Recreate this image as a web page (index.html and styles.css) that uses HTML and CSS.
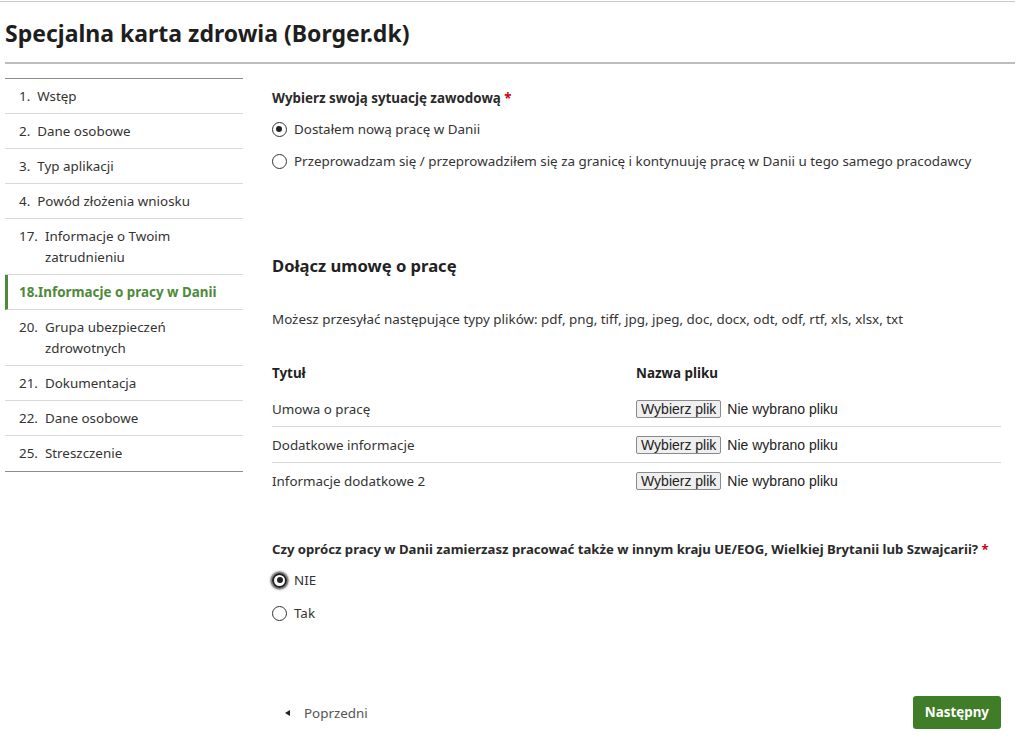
FILE: index.html
```html
<!DOCTYPE html>
<html lang="pl">
<head>
<meta charset="utf-8">
<title>Specjalna karta zdrowia (Borger.dk)</title>
<link rel="stylesheet" href="styles.css">
</head>
<body>
<div class="topline"></div>
<div class="page">
  <header class="header">
    <h1 class="title">Specjalna karta zdrowia (Borger.dk)</h1>
  </header>
  <div class="layout">
    <nav class="steps">
      <div class="step"><span class="num">1.</span><span class="lbl">Wstęp</span></div>
      <div class="step"><span class="num">2.</span><span class="lbl">Dane osobowe</span></div>
      <div class="step"><span class="num">3.</span><span class="lbl">Typ aplikacji</span></div>
      <div class="step"><span class="num">4.</span><span class="lbl">Powód złożenia wniosku</span></div>
      <div class="step"><span class="num">17.</span><span class="lbl">Informacje o Twoim zatrudnieniu</span></div>
      <div class="step active"><span class="num">18.</span><span class="lbl">Informacje o pracy w Danii</span></div>
      <div class="step"><span class="num">20.</span><span class="lbl">Grupa ubezpieczeń zdrowotnych</span></div>
      <div class="step"><span class="num">21.</span><span class="lbl">Dokumentacja</span></div>
      <div class="step"><span class="num">22.</span><span class="lbl">Dane osobowe</span></div>
      <div class="step"><span class="num">25.</span><span class="lbl">Streszczenie</span></div>
    </nav>
    <main class="main">
      <div class="q">Wybierz swoją sytuację zawodową <span class="req">*</span></div>
      <label class="radio r1"><span class="dot checked"></span><span>Dostałem nową pracę w Danii</span></label>
      <label class="radio r2"><span class="dot"></span><span>Przeprowadzam się / przeprowadziłem się za granicę i kontynuuję pracę w Danii u tego samego pracodawcy</span></label>

      <h2 class="h2">Dołącz umowę o pracę</h2>
      <p class="info">Możesz przesyłać następujące typy plików: pdf, png, tiff, jpg, jpeg, doc, docx, odt, odf, rtf, xls, xlsx, txt</p>

      <div class="files">
        <div class="frow fhead"><div class="c1">Tytuł</div><div class="c2">Nazwa pliku</div></div>
        <div class="frow"><div class="c1">Umowa o pracę</div><div class="c2"><span class="fbtn">Wybierz plik</span><span class="fname">Nie wybrano pliku</span></div></div>
        <div class="frow"><div class="c1">Dodatkowe informacje</div><div class="c2"><span class="fbtn">Wybierz plik</span><span class="fname">Nie wybrano pliku</span></div></div>
        <div class="frow last"><div class="c1">Informacje dodatkowe 2</div><div class="c2"><span class="fbtn">Wybierz plik</span><span class="fname">Nie wybrano pliku</span></div></div>
      </div>

      <div class="q q2">Czy oprócz pracy w Danii zamierzasz pracować także w innym kraju UE/EOG, Wielkiej Brytanii lub Szwajcarii? <span class="req">*</span></div>
      <label class="radio r3"><span class="dot checked focus"></span><span>NIE</span></label>
      <label class="radio r4"><span class="dot"></span><span>Tak</span></label>

      <div class="nav">
        <span class="prev"><span class="tri"></span>Poprzedni</span>
        <span class="next">Następny</span>
      </div>
    </main>
  </div>
</div>
</body>
</html>
```
FILE: styles.css
```css
* { box-sizing: border-box; }
html, body { margin: 0; padding: 0; background: #fff; }
body {
  font-family: "Noto Sans", "Liberation Sans", sans-serif;
  font-size: 13.4px;
  color: #333;
  width: 1024px;
  height: 737px;
  overflow: hidden;
}
.topline { height: 1px; margin-top: 1px; width: 1015px; background: #c8c8c8; }
.page { width: 1015px; padding-left: 5px; }
.header { border-bottom: 2px solid #bdbdbd; height: 62px; display: flex; align-items: center; }
.title { margin: 0; font-size: 23px; font-weight: 700; color: #1e1e1e; letter-spacing: 0; padding-top: 2px; }
.layout { display: flex; align-items: flex-start; gap: 29px; margin-top: 14px; }
.steps { width: 238px; flex: none; border-top: 1px solid #8c8c8c; border-bottom: 1px solid #8c8c8c; }
.step { display: flex; padding: 7px 12px 6px 14px; line-height: 21px; min-height: 35px; border-bottom: 1px solid #d9d9d9; color: #333; }
.step:last-child { border-bottom: none; }
.step .num { flex: none; margin-right: 7px; }
.step.active { border-left: 3px solid #4e8a39; padding-left: 11px; color: #4e8a39; font-weight: 700; }
.step.active .num { margin-right: 0; }
.main { flex: 1; padding-right: 14px; padding-top: 10px; min-width: 0; }
.q { font-weight: 700; line-height: 20px; color: #2a2a2a; }
.req { color: #d0021b; }
.radio { display: flex; align-items: center; gap: 7px; line-height: 20px; }
.r1 { margin-top: 11px; }
.r2 { margin-top: 12px; }
.dot { width: 15px; height: 15px; border: 1.5px solid #333; border-radius: 50%; flex: none; position: relative; }
.dot.checked::after { content: ""; position: absolute; left: 3px; top: 3px; width: 6px; height: 6px; border-radius: 50%; background: #222; }
.dot.focus { border: 2px solid #222; box-shadow: 0 0 0 1.5px #888, 0 0 2px 2px #aaa; }
.dot.focus::after { left: 2.5px; top: 2.5px; width: 6px; height: 6px; }
.h2 { margin: 83px 0 0; font-size: 16.6px; font-weight: 700; line-height: 24px; color: #222; }
.info { margin: 31px 0 0; line-height: 20px; }
.files { margin-top: 26px; }
.frow { display: flex; align-items: center; height: 36px; border-bottom: 1px solid #d9d9d9; }
.frow.fhead { height: 36px; border-bottom: none; font-weight: 700; color: #222; }
.frow.last { border-bottom: none; }
.c1 { width: 364px; flex: none; }
.c2 { display: flex; align-items: center; }
.fbtn { font-family: "Liberation Sans", Arial, sans-serif; font-size: 14px; color: #222; background: #efefef; border: 1px solid #8a8a8a; border-radius: 2px; padding: 1px 4px; line-height: 14px; }
.fname { font-family: "Liberation Sans", Arial, sans-serif; font-size: 14px; color: #222; margin-left: 6px; }
.q2 { margin-top: 40px; white-space: nowrap; font-size: 13.15px; }
.r3 { margin-top: 11px; }
.r4 { margin-top: 13px; }
.nav { display: flex; justify-content: space-between; align-items: center; margin-top: 73px; padding-left: 13px; }
.prev { display: flex; align-items: center; color: #555; }
.tri { width: 0; height: 0; border-top: 3.5px solid transparent; border-bottom: 3.5px solid transparent; border-right: 5px solid #222; margin-right: 14px; }
.next { background: #3f7e27; color: #fff; font-weight: 700; padding: 0 12px; height: 33px; line-height: 33px; border-radius: 3px; }
```
